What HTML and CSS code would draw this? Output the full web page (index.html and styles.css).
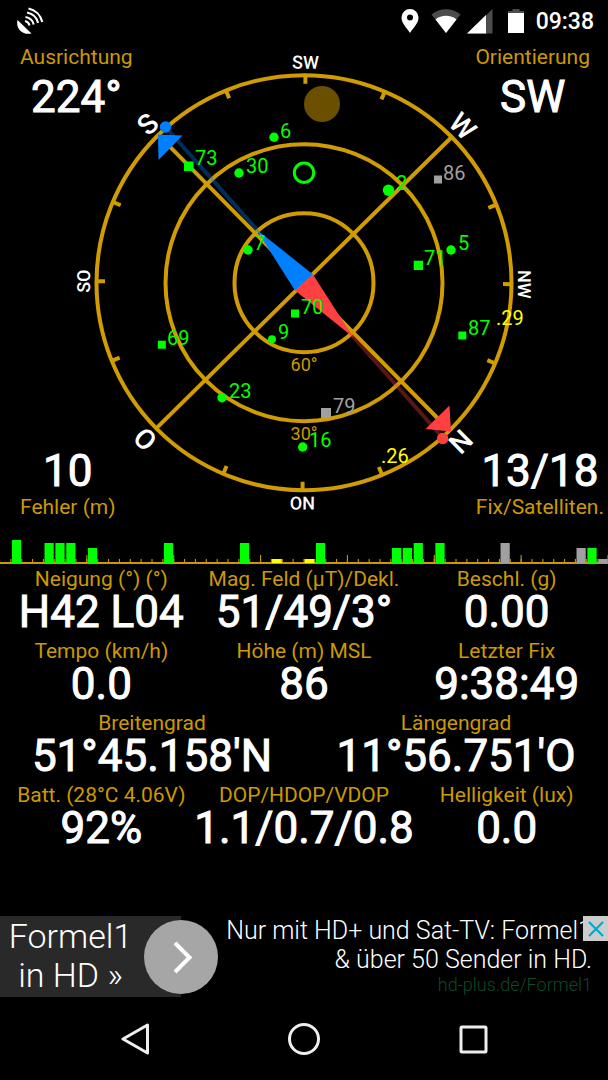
FILE: index.html
```
<!DOCTYPE html>
<html lang="de">
<head>
    <meta charset="UTF-8">
    <meta name="viewport" content="width=device-width, initial-scale=1.0">
    <title>GPS Status</title>
    <link rel="stylesheet" href="styles.css">
</head>
<body>
    <header class="statusbar">
        <svg class="dish" width="28" height="28" viewBox="0 0 28 28" aria-hidden="true">
            <path d="M1.500 13 C-.500 21 6 28.500 15.500 26.500 Z" fill="#fff"/>
            <g fill="none" stroke="#fff" stroke-width="2.100">
                <path d="M9 14 A6 6 0 0 1 13.500 18.500"/>
                <path d="M9.500 10 A10 10 0 0 1 17.700 17.500"/>
                <path d="M11 5.500 A14 14 0 0 1 22 16"/>
                <path d="M12.500 1.500 A18 18 0 0 1 26.300 15"/>
            </g>
        </svg>
        <div class="status-icons">
            <svg class="pin" width="18" height="24" viewBox="0 0 18 24" aria-hidden="true">
                <path d="M9 0 A8.500 8.500 0 0 0 .5 8.500 C.5 14 5 18 9 24 C13 18 17.500 14 17.500 8.500 A8.500 8.500 0 0 0 9 0 Z M9 5.500 A3 3 0 1 1 9 11.500 A3 3 0 1 1 9 5.500 Z" fill="#fff" fill-rule="evenodd"/>
            </svg>
            <svg class="wifi" width="30" height="24" viewBox="0 0 30 24" aria-hidden="true">
                <path d="M15 24 L.5 5.500 C9 -1.500 21 -1.500 29.500 5.500 Z" fill="#4c4c4c"/>
                <path d="M15 24 L4.500 10.500 C10 5.500 20 5.500 25.500 10.500 Z" fill="#fff"/>
            </svg>
            <svg class="signal" width="26" height="26" viewBox="0 0 26 26" aria-hidden="true">
                <path d="M0 25.500 L25.500 1 V25.500 Z" fill="#4c4c4c"/>
                <path d="M0 25.500 L19 7 V25.500 Z" fill="#fff"/>
            </svg>
            <svg class="battery" width="16" height="24" viewBox="0 0 16 24" aria-hidden="true">
                <path d="M4.500 0 H11.500 V2 H16 V5 H0 V2 H4.500 Z" fill="#4c4c4c"/>
                <path d="M0 4 H16 V24 H0 Z" fill="#fff"/>
            </svg>
            <span class="clock">09:38</span>
        </div>
    </header>

    <main>
        <section class="sky">
            <svg class="compass" viewBox="0 42 608 480" role="img" aria-label="Kompass">
                <g class="grid">
                    <circle cx="304" cy="282.700" r="207.500"/>
                    <circle cx="304" cy="282.700" r="138.500"/>
                    <circle cx="304" cy="282.700" r="69.500"/>
                    <g transform="translate(304 282.700) rotate(.4)">
                        <path d="M-147 -147 L147 147 M147 -147 L-147 147"/>
                        <path d="M0 -209 V-199 M0 209 V199 M-209 0 H-199 M209 0 H199"/>
                        <path d="M0 -209 V-199 M0 209 V199 M-209 0 H-199 M209 0 H199" transform="rotate(22.500)"/>
                        <path d="M0 -209 V-199 M0 209 V199 M-209 0 H-199 M209 0 H199" transform="rotate(-22.500)"/>
                    </g>
                </g>
                <g class="elevation">
                    <text x="304" y="371">60°</text>
                    <text x="304" y="440">30°</text>
                </g>
                <g class="cardinal" transform="translate(304 282.700) rotate(.4)">
                    <text y="-213" transform="rotate(-45)">S</text>
                    <text y="-213" transform="rotate(45)">W</text>
                    <text y="-213" transform="rotate(135)">N</text>
                    <text y="-213" transform="rotate(-135)">O</text>
                </g>
                <g class="intercardinal" transform="translate(304 282.700) rotate(.4)">
                    <text y="-214">SW</text>
                    <text y="-214" transform="rotate(90)">NW</text>
                    <text y="-214" transform="rotate(180)">NO</text>
                    <text y="-214" transform="rotate(-90)">SO</text>
                </g>

                <circle class="sun" cx="322" cy="104" r="18"/>

                <!-- magnetic needle -->
                <path class="ray south" d="M257 230 L165.500 127"/>
                <path class="ray north" d="M351 334 L443 438"/>
                <path class="south" d="M256 229 L313 274.500 L295 290.500 Z"/>
                <path class="north" d="M353 337 L313 274.500 L295 290.500 Z"/>
                <path class="south" d="M158 134.500 L182.500 135.500 L158.500 160 Z"/>
                <path class="north" d="M449.500 405.500 L425.500 429 L451 431.500 Z"/>
                <circle class="south" cx="165.500" cy="127" r="5.700"/>
                <circle class="north" cx="442.700" cy="438.500" r="5.700"/>

                <circle class="level" cx="304" cy="172.700" r="9.700"/>

                <!-- satellites: round = GPS, square = GLONASS -->
                <g class="sat used">
                    <circle cx="274" cy="137.300" r="4.700"/><text x="280" y="138">6</text>
                    <circle cx="239" cy="173" r="4.700"/><text x="246" y="173">30</text>
                    <circle cx="388.500" cy="190.300" r="5.700"/><text x="396" y="190">2</text>
                    <circle cx="248" cy="250" r="4.700"/><text x="254" y="250">7</text>
                    <circle cx="451" cy="250" r="4.700"/><text x="458" y="250">5</text>
                    <circle cx="272" cy="339.300" r="4"/><text x="278" y="339">9</text>
                    <circle cx="222" cy="397.700" r="4.700"/><text x="229" y="398">23</text>
                    <circle cx="302.700" cy="447" r="4.700"/><text x="309" y="447">16</text>
                    <rect x="184" y="161.500" width="9.500" height="9.500"/><text x="195" y="165">73</text>
                    <rect x="413.700" y="260.700" width="9.300" height="9.300"/><text x="424" y="265">71</text>
                    <rect x="291" y="309.500" width="8" height="8"/><text x="301" y="314">70</text>
                    <rect x="157.800" y="340.700" width="8" height="8"/><text x="167" y="345">69</text>
                    <rect x="458.300" y="331.500" width="8" height="8"/><text x="468" y="335">87</text>
                </g>
                <g class="sat unused">
                    <rect x="434" y="175.500" width="8" height="8"/><text x="443" y="180">86</text>
                    <rect x="321" y="408" width="10" height="10"/><text x="333" y="413">79</text>
                </g>
                <g class="sat weak">
                    <text x="496" y="325">.29</text>
                    <text x="381" y="463">.26</text>
                </g>
            </svg>

            <div class="readout corner top left">
                <span class="label">Ausrichtung</span>
                <span class="value">224°</span>
            </div>
            <div class="readout corner top right">
                <span class="label">Orientierung</span>
                <span class="value">SW</span>
            </div>
            <div class="readout corner bottom left">
                <span class="value">10</span>
                <span class="label">Fehler (m)</span>
            </div>
            <div class="readout corner bottom right">
                <span class="value">13/18</span>
                <span class="label">Fix/Satelliten.</span>
            </div>
        </section>

        <!-- one slot of 10 units per satellite -->
        <svg class="strength" viewBox="0 0 560 24" preserveAspectRatio="none" role="img" aria-label="Signalstärke">
            <path class="ticks" d="M9.500 21 H560" stroke-width="4" stroke-dasharray="1 9"/>
            <path class="ticks" d="M79.500 19 H560" stroke-width="8" stroke-dasharray="1 79"/>
            <path class="ticks" d="M0 23 H560" stroke-width="2"/>
            <path class="used" d="M11 0 h8.500 v23 h-8.500 Z M41 3 h8.500 v20 h-8.500 Z M51 3 h8.500 v20 h-8.500 Z M61 3 h8.500 v20 h-8.500 Z M81 8 h8.500 v15 h-8.500 Z M151 3 h8.500 v20 h-8.500 Z M221 3 h8.500 v20 h-8.500 Z M291 3 h8.500 v20 h-8.500 Z"/>
            <path class="used" d="M361 8 h8.500 v15 h-8.500 Z M371 8 h8.500 v15 h-8.500 Z M381 3 h8.500 v20 h-8.500 Z M401 3 h8.500 v20 h-8.500 Z M541 8 h8.500 v15 h-8.500 Z"/>
            <path class="weak" d="M250.500 19 h9 v4 h-9 Z M280.500 19 h9 v4 h-9 Z"/>
            <path class="unused" d="M461 3 h8.500 v20 h-8.500 Z M531 8 h8.500 v15 h-8.500 Z M551 19 h8.500 v4 h-8.500 Z"/>
        </svg>

        <section class="data">
            <div class="row">
                <div class="readout"><span class="label">Neigung (°) (°)</span><span class="value">H42 L04</span></div>
                <div class="readout"><span class="label">Mag. Feld (μT)/Dekl.</span><span class="value">51/49/3°</span></div>
                <div class="readout"><span class="label">Beschl. (g)</span><span class="value">0.00</span></div>
            </div>
            <div class="row">
                <div class="readout"><span class="label">Tempo (km/h)</span><span class="value">0.0</span></div>
                <div class="readout"><span class="label">Höhe (m) MSL</span><span class="value">86</span></div>
                <div class="readout"><span class="label">Letzter Fix</span><span class="value">9:38:49</span></div>
            </div>
            <div class="row">
                <div class="readout"><span class="label">Breitengrad</span><span class="value">51°45.158'N</span></div>
                <div class="readout"><span class="label">Längengrad</span><span class="value">11°56.751'O</span></div>
            </div>
            <div class="row">
                <div class="readout"><span class="label">Batt. (28°C 4.06V)</span><span class="value">92%</span></div>
                <div class="readout"><span class="label">DOP/HDOP/VDOP</span><span class="value">1.1/0.7/0.8</span></div>
                <div class="readout"><span class="label">Helligkeit (lux)</span><span class="value">0.0</span></div>
            </div>
        </section>
    </main>

    <aside class="ad">
        <a class="ad-link" href="#">
            <span class="ad-title">Formel1<br>in HD »</span>
            <svg class="ad-arrow" width="74" height="74" viewBox="0 0 74 74" aria-hidden="true">
                <circle cx="37" cy="37" r="37" fill="#a6a6a6"/>
                <path d="M31 23 L45.500 37.500 L31 52" fill="none" stroke="#fff" stroke-width="4"/>
            </svg>
            <span class="ad-text">Nur mit HD+ und Sat-TV: Formel1<br>&amp; über 50 Sender in HD.<small class="ad-url">hd-plus.de/Formel1</small></span>
        </a>
        <button class="ad-close" type="button" aria-label="Anzeige schließen">
            <svg width="16" height="16" viewBox="0 0 16 16" aria-hidden="true">
                <path d="M1 1 L15 15 M15 1 L1 15" stroke="#00aacf" stroke-width="2.200"/>
            </svg>
        </button>
    </aside>

    <nav class="navbar">
        <button type="button" aria-label="Zurück">
            <svg width="32" height="32" viewBox="0 0 32 32"><path d="M28.500 2 V30 L4 16 Z"/></svg>
        </button>
        <button type="button" aria-label="Startseite">
            <svg width="32" height="32" viewBox="0 0 32 32"><circle cx="16" cy="16" r="14.500"/></svg>
        </button>
        <button type="button" aria-label="Übersicht">
            <svg width="32" height="32" viewBox="0 0 32 32"><rect x="4" y="4" width="25" height="25" rx="1"/></svg>
        </button>
    </nav>
</body>
</html>
```

FILE: styles.css
```
* {
    box-sizing: border-box;
}

body {
    margin: 0;
    min-height: 100vh;
    display: flex;
    flex-direction: column;
    background: #000;
    color: #fff;
    font-family: Roboto, "Liberation Sans", sans-serif;
}

button {
    display: flex;
    align-items: center;
    justify-content: center;
    padding: 0;
    border: none;
    background: none;
    cursor: pointer;
}

/* status bar */
.statusbar {
    display: flex;
    justify-content: space-between;
    align-items: center;
    height: 42px;
    padding: 0 14px 0 16px;
}

.status-icons {
    display: flex;
    align-items: center;
    gap: 12px;
}

.signal {
    margin: 0 3px 0 -6px;
}

.clock {
    padding-top: 2px;
    font-size: 23px;
    font-weight: 500;
    line-height: 26px;
}

/* compass */
.sky {
    display: grid;
    grid-template-columns: 1fr 1fr;
    grid-template-rows: 1fr 1fr;
}

.compass {
    grid-area: 1 / 1 / 3 / 3;
    display: block;
    width: 100%;
}

.compass text {
    font-size: 20px;
}

.grid {
    fill: none;
    stroke: #d09c00;
    stroke-width: 4;
}

.compass .elevation text {
    font-size: 18px;
    fill: #cc9900;
    text-anchor: middle;
}

.compass .cardinal text {
    font-size: 28px;
    font-weight: 500;
    fill: #fff;
    text-anchor: middle;
}

.compass .intercardinal text {
    font-size: 18px;
    font-weight: 500;
    fill: #fff;
    text-anchor: middle;
}

.sun {
    fill: #6a4f00;
}

.south {
    fill: #0080ff;
    stroke: #0080ff;
    stroke-width: 0;
}

.north {
    fill: #ff4040;
    stroke: #ff4040;
    stroke-width: 0;
}

.ray {
    stroke-width: 4;
    opacity: 0.35;
}

.level {
    fill: none;
    stroke: #00ff00;
    stroke-width: 3;
}

.used {
    fill: #00ff00;
}

.unused {
    fill: #a0a0a0;
}

.weak {
    fill: #ffff00;
}

/* readouts */
.readout {
    display: flex;
    flex-direction: column;
    align-items: center;
    white-space: nowrap;
}

.label {
    color: #cc9900;
    font-size: 21px;
    line-height: 26px;
}

.value {
    font-size: 44px;
    line-height: 40px;
    -webkit-text-stroke: 1px #fff;
}

.corner.top {
    grid-row: 1;
    align-self: start;
    gap: 7px;
    padding-top: 2px;
}

.corner.bottom {
    grid-row: 2;
    align-self: end;
    gap: 3px;
    padding-bottom: 2px;
}

.corner.left {
    grid-column: 1;
    justify-self: start;
    margin-left: 20px;
}

.corner.right {
    grid-column: 2;
    justify-self: end;
    margin-right: 18px;
}

.corner.bottom.right {
    margin-right: 4px;
}

.strength {
    display: block;
    width: 100%;
    height: 24px;
    margin-top: 18px;
}

.ticks {
    fill: none;
    stroke: #cc9900;
}

.data {
    display: grid;
    gap: 6px;
    padding-top: 2px;
}

.row {
    display: grid;
    grid-auto-flow: column;
    grid-auto-columns: minmax(0, 1fr);
}

/* ad banner */
.ad {
    position: relative;
    margin-top: auto;
}

.ad-link {
    display: flex;
    justify-content: space-between;
    height: 81px;
    color: #fff;
    font-weight: 300;
    text-decoration: none;
}

.ad-title {
    width: 181px;
    padding: 1px 40px 0 0;
    background: #292929;
    font-size: 34px;
    line-height: 39px;
    text-align: center;
}

.ad-arrow {
    position: absolute;
    left: 144px;
    top: 4px;
}

.ad-text {
    padding-right: 16px;
    font-size: 25px;
    line-height: 29px;
    text-align: right;
    white-space: nowrap;
}

.ad-url {
    display: block;
    color: #0c4a2a;
    font-size: 18px;
    line-height: 22px;
}

.ad-close {
    position: absolute;
    top: 0;
    right: 0;
    width: 25px;
    height: 25px;
    background: #ccc;
}

/* navigation bar */
.navbar {
    display: flex;
    justify-content: center;
    gap: 105px;
    height: 83px;
}

.navbar button {
    width: 64px;
}

.navbar svg {
    fill: none;
    stroke: #eee;
    stroke-width: 3;
    stroke-linejoin: round;
}
```
